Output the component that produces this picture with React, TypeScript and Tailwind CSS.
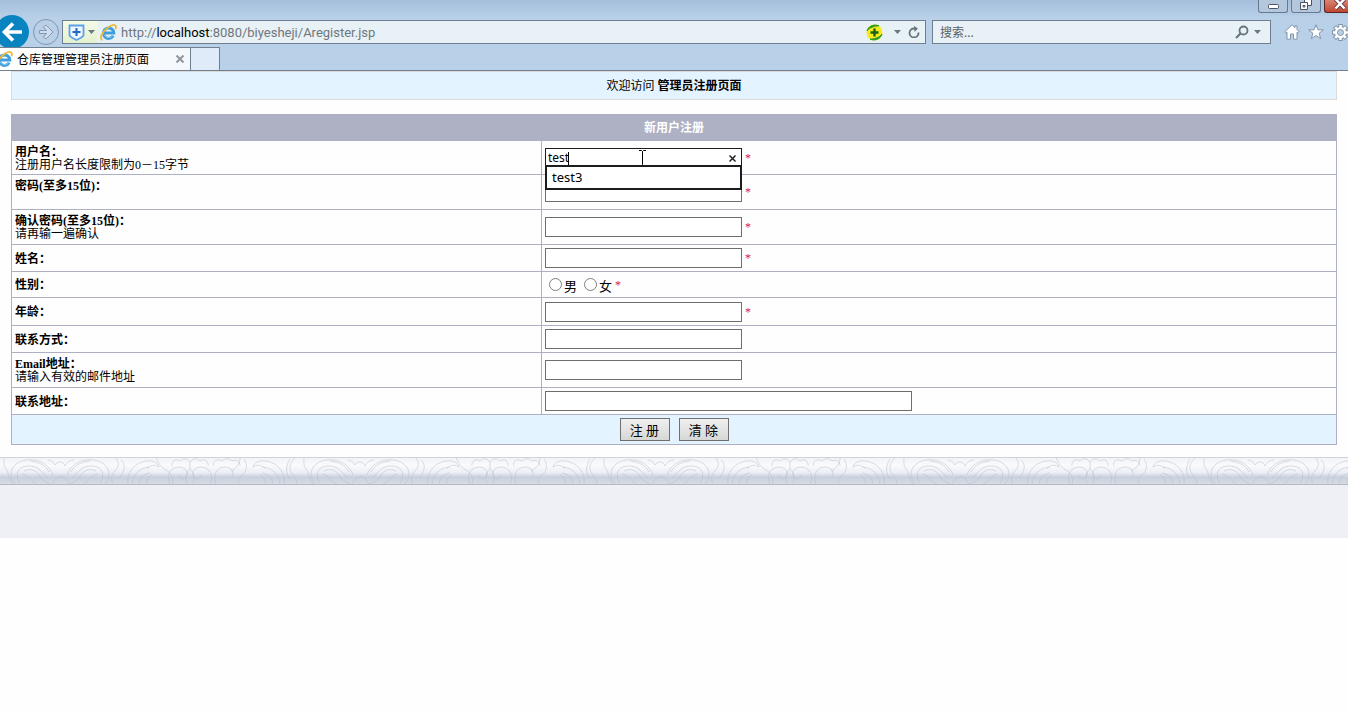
import { useState, type ReactNode } from 'react';

function IeIcon() {
  return (
    <svg className="size-[17px] shrink-0" viewBox="0 0 17 17" fill="none">
      <path d="M13.2 11.6A5.2 5.2 0 1 1 13.8 9H5" stroke="#3f9fde" strokeWidth="3" />
      <path d="M12.4 12.2A5.2 5.2 0 0 1 4 10.5" stroke="#7cc8f0" strokeWidth="1" />
      <path d="M2.6 15.9C.2 15.6.4 12 3.2 8.2 6.500 3.6 12.500-.3 15.200 1.400c1 .7.9 2.200.2 3.800" stroke="#ecbb38" strokeWidth="1.8" />
    </svg>
  );
}

function Caret() {
  return (
    <svg className="h-[4px] w-[7px] shrink-0" viewBox="0 0 7 4">
      <path d="M0 0h7L3.5 4z" fill="#6b7780" />
    </svg>
  );
}

function BackArrow() {
  return (
    <svg className="size-[22px]" viewBox="0 0 22 22" fill="none" stroke="#fff" strokeWidth="3.6">
      <path d="M21 11H4M12 2.500L3.500 11l8.500 8.500" />
    </svg>
  );
}

function ForwardArrow() {
  return (
    <svg className="size-[16px]" viewBox="0 0 16 16">
      <path d="M1.5 6.5h7L5.5 3 7 1.5h1.5L15 8l-6.5 6.5H7L5.5 13l3-3.5h-7z" fill="#cfdeee" stroke="#8296ae" />
    </svg>
  );
}

function GearIcon() {
  return (
    <svg className="size-[17px]" viewBox="0 0 17 17" fill="none">
      <g stroke="#8295ab" strokeWidth="4.5">
        <path d="M8.5 0v17M0 8.5h17M2.5 2.5l12 12M14.5 2.5l-12 12" />
      </g>
      <circle cx="8.5" cy="8.5" r="6.5" fill="#8295ab" />
      <g stroke="#fff" strokeWidth="2.5">
        <path d="M8.5 1v15M1 8.5h15M3.2 3.2l10.600 10.600M13.8 3.200L3.200 13.800" />
      </g>
      <circle cx="8.5" cy="8.5" r="5.5" fill="#fff" />
      <circle cx="8.5" cy="8.5" r="3" fill="#b7d0e8" stroke="#8295ab" />
    </svg>
  );
}

function BrowserChrome() {
  return (
    <header className="overflow-hidden bg-linear-to-b from-[#a5bedb] to-[#b8d0e8] to-[18px] font-['Noto_Sans','Noto_Sans_CJK_SC',sans-serif] text-[12px]">
      <div className="flex h-[17px] items-start justify-end gap-[3px]">
        <button aria-label="Minimize" className="flex h-[13px] w-[30px] items-center justify-center rounded-b-[3px] border border-t-0 border-[#66798f] bg-[#b5c7dc]">
          <svg className="h-[5px] w-[11px]" viewBox="0 0 11 5">
            <rect x=".5" y=".5" width="10" height="4" rx="1" fill="#fff" stroke="#4a5563" />
          </svg>
        </button>
        <button aria-label="Restore" className="flex h-[13px] w-[30px] items-start justify-center rounded-b-[3px] border border-t-0 border-[#66798f] bg-[#b5c7dc]">
          <svg className="h-[10px] w-[12px]" viewBox="0 0 12 10" fill="#fff" stroke="#4a5563">
            <path d="M4.500-1h7v6.500h-7z" />
            <path d="M.5 2.500h7v7h-7z" />
            <path d="M3 5.500h2v1.500H3z" />
          </svg>
        </button>
        <button aria-label="Close" className="flex h-[13px] w-[24px] items-start justify-center rounded-bl-[3px] border-b border-l border-[#5c2420] bg-linear-to-b from-[#d98572] to-[#c1442e] pl-[6px]">
          <svg className="h-[10px] w-[12px]" viewBox="0 0 12 10">
            <path d="M1.500-1l9 9.500M10.500-1l-9 9.500" stroke="#5b3a44" strokeWidth="4" />
            <path d="M1.500-1l9 9.500M10.500-1l-9 9.500" stroke="#fff" strokeWidth="2.5" />
          </svg>
        </button>
      </div>

      <div className="flex h-[30px] items-center">
        <button aria-label="Back" className="-ml-[5px] flex size-[34px] shrink-0 items-center justify-center rounded-full bg-[#0984c0]">
          <BackArrow />
        </button>
        <button aria-label="Forward" className="ml-1 flex size-[26px] shrink-0 items-center justify-center rounded-full border border-[#8296ae]">
          <ForwardArrow />
        </button>

        <div className="ml-[3px] flex h-[24px] min-w-0 flex-1 items-center border border-[#6f7f90] bg-[#e8f1f5]">
          <div className="flex h-full w-[34px] shrink-0 items-center gap-[3px] bg-linear-to-b from-[#f4fbe6] to-[#e2f1cf] pl-[5px]">
            <svg className="size-[17px]" viewBox="0 0 17 17" fill="none" stroke="#5d9fe8">
              <path d="M1.5 1.5h14V11c0 2-3 3-7 5-4-2-7-3-7-5z" fill="#eef7ff" strokeWidth="1.8" />
              <path d="M8.5 4v8M4.5 8h8" stroke="#2367c4" strokeWidth="2" />
            </svg>
            <Caret />
          </div>
          <span className="ml-[3px]">
            <IeIcon />
          </span>
          <p className="ml-[4px] min-w-0 flex-1 truncate pt-px font-['Roboto',sans-serif] text-[13px] text-[#6f777d]">
            http://<span className="text-black">localhost</span>:8080/biyesheji/Aregister.jsp
          </p>
          <svg className="size-[17px] shrink-0" viewBox="0 0 17 17">
            <circle cx="8.5" cy="8.5" r="8" fill="#f7ea1e" />
            <path d="M1 7C2 3 7-.5 13 1.800 9 2 4 3 1 7zM16 10c-1 4-6 7.500-12 5.200 4-.2 9-1.200 12-5.200z" fill="#2f9a22" stroke="#2f9a22" />
            <path d="M8.5 4.500v8M4.500 8.500h8" stroke="#176313" strokeWidth="2.4" />
          </svg>
          <span className="ml-[11px] flex">
            <Caret />
          </span>
          <button aria-label="Refresh" className="mr-[5px] ml-[7px]">
            <svg className="size-[12px]" viewBox="0 0 12 12" fill="none">
              <path d="M10.5 6.5A4.5 4.5 0 1 1 7 2.6" stroke="#68737c" strokeWidth="1.8" />
              <path d="M6 0l4 2.5L6.5 6z" fill="#68737c" />
            </svg>
          </button>
        </div>

        <div className="ml-[6px] flex h-[24px] w-[339px] shrink-0 items-center border border-[#6f7f90] bg-[#e8f1f5] pr-[9px] pl-[7px]">
          <input
            aria-label="搜索"
            placeholder="搜索..."
            className="min-w-0 flex-1 bg-transparent pt-[2px] text-[12px] outline-none placeholder:text-[#5a6066]"
          />
          <svg className="size-[14px]" viewBox="0 0 14 14" fill="none" stroke="#68737c">
            <circle cx="8.5" cy="5.5" r="4" strokeWidth="1.8" />
            <path d="M5.5 8.5L1 13" strokeWidth="2.200" />
          </svg>
          <span className="ml-[5px] flex">
            <Caret />
          </span>
        </div>

        <div className="-mr-px ml-[13px] flex shrink-0 gap-2">
          <svg className="size-[16px]" viewBox="0 0 16 16" fill="#fff" stroke="#8295ab">
            <path d="M8 .8L.6 8l1.200 1.200L3 8.200v7h3.500V10h3v5.200H13v-7l1.200 1L15.400 8 13 5.600V1.800h-2v1.900z" />
          </svg>
          <svg className="size-[16px]" viewBox="0 0 16 16" fill="#fff" stroke="#8295ab">
            <path d="M8 .8l1.900 5h5.500l-4.300 3.500 1.600 5.400L8 11.500l-4.700 3.200 1.600-5.400L.6 5.800h5.500z" />
          </svg>
          <GearIcon />
        </div>
      </div>

      <div className="flex h-[24px] border-b border-[#6f7f90]">
        <div className="flex w-[191px] items-center border-t border-r border-[#6f7f90] bg-linear-to-r from-white to-[#f4f8fc] pr-[6px]">
          <span className="-ml-[4px]">
            <IeIcon />
          </span>
          <span className="ml-[4px] flex-1 pt-[2px] text-black">仓库管理管理员注册页面</span>
          <button aria-label="关闭">
            <svg className="size-[8px]" viewBox="0 0 8 8" stroke="#8f969c" strokeWidth="2">
              <path d="M.5.5l7 7M7.5.5l-7 7" />
            </svg>
          </button>
        </div>
        <button aria-label="New tab" className="w-[29px] border-t border-r border-[#6f7f90] bg-[#dfebf8]" />
      </div>
    </header>
  );
}

function Required() {
  return <span className="ml-[3px] text-[12px] leading-[12px] text-[#e0202c]">*</span>;
}

type RowProps = {
  label: string;
  hint?: string;
  htmlFor?: string;
  className: string;
  children: ReactNode;
};

function Row({ label, hint, htmlFor, className, children }: RowProps) {
  return (
    <tr className={className}>
      <td className="border border-[#acb0c2] px-[3px] pt-[2px]">
        <label htmlFor={htmlFor} className="block font-bold">
          {label}
        </label>
        {hint !== undefined && <p className="min-h-[13px]">{hint}</p>}
      </td>
      <td className="border border-[#acb0c2] px-[3px]">
        <div className="flex items-center">{children}</div>
      </td>
    </tr>
  );
}

const field = 'h-[20px] w-[197px] border border-[#6e6e6e] bg-white px-[2px] outline-none';
const radio = 'size-[13px] appearance-none rounded-full border border-[#808080] bg-white checked:bg-[#333]';
const button = 'h-[23px] w-[50px] border border-[#707070] bg-linear-to-b from-[#efefef] to-[#d6d8d6] pt-px';

function RegisterForm() {
  const [username, setUsername] = useState('test');

  return (
    <form className="mt-[14px]">
      <table className="w-full table-fixed border-collapse border border-[#acb0c2]">
        <colgroup>
          <col className="w-2/5" />
          <col className="w-3/5" />
        </colgroup>
        <thead>
          <tr className="h-[26px] bg-[#aeb1c3]">
            <th colSpan={2} className="pt-[2px] text-center font-bold text-white">
              新用户注册
            </th>
          </tr>
        </thead>
        <tbody>
          <Row label="用户名：" hint="注册用户名长度限制为0－15字节" htmlFor="username" className="h-[34px]">
            <div className="relative flex">
              <input
                id="username"
                value={username}
                onChange={(e) => setUsername(e.target.value)}
                className="h-[20px] w-[197px] border border-[#1c1c1c] bg-white px-[2px] font-['Noto_Sans',sans-serif] text-[12px] outline-none"
              />
              {/* text caret and mouse pointer */}
              <span className="absolute top-[4px] left-[23px] h-[13px] w-px bg-black" />
              <svg className="absolute top-[2px] left-[94px] h-[16px] w-[7px]" viewBox="0 0 7 16" fill="none" stroke="#000">
                <path d="M0 .5h2.500l1 1 1-1H7M3.500 1.500v13M0 15.500h2.500l1-1 1 1H7" />
              </svg>
              <button type="button" aria-label="清除" onClick={() => setUsername('')} className="absolute top-[7px] right-[6px]">
                <svg className="size-[7px]" viewBox="0 0 7 7" stroke="#222" strokeWidth="1.5">
                  <path d="M.5.5l6 6M6.500.5l-6 6" />
                </svg>
              </button>
              <ul className="absolute top-[17px] left-0 z-10 w-full border-2 border-[#1c1c1c] bg-white font-['Noto_Sans',sans-serif] text-[13px] leading-[21px]">
                <li className="px-[5px]">test3</li>
              </ul>
            </div>
            <Required />
          </Row>
          <Row label="密码(至多15位)：" hint="" htmlFor="password" className="h-[35px]">
            <input id="password" type="password" className={field} />
            <Required />
          </Row>
          <Row label="确认密码(至多15位)：" hint="请再输一遍确认" htmlFor="confirm" className="h-[35px]">
            <input id="confirm" type="password" className={field} />
            <Required />
          </Row>
          <Row label="姓名：" htmlFor="name" className="h-[27px]">
            <input id="name" className={field} />
            <Required />
          </Row>
          <Row label="性别：" className="h-[26px]">
            <label className="ml-1 flex items-center gap-[2px] text-[13px]">
              <input type="radio" name="sex" className={radio} />
              <span className="pt-[3px]">男</span>
            </label>
            <label className="ml-[7px] flex items-center gap-[2px] text-[13px]">
              <input type="radio" name="sex" className={radio} />
              <span className="pt-[3px]">女</span>
            </label>
            <Required />
          </Row>
          <Row label="年龄：" htmlFor="age" className="h-[28px]">
            <input id="age" className={field} />
            <Required />
          </Row>
          <Row label="联系方式：" htmlFor="phone" className="h-[27px]">
            <input id="phone" className={field} />
          </Row>
          <Row label="Email地址：" hint="请输入有效的邮件地址" htmlFor="email" className="h-[35px]">
            <input id="email" className={field} />
          </Row>
          <Row label="联系地址：" htmlFor="address" className="h-[27px]">
            <input id="address" className="h-[20px] w-[367px] border border-[#6e6e6e] bg-white px-[2px] outline-none" />
          </Row>
          <tr className="h-[30px] bg-[#e3f3ff]">
            <td colSpan={2} className="border border-[#acb0c2]">
              <div className="flex justify-center gap-[9px] text-[13px]">
                <button type="button" className={button}>
                  注 册
                </button>
                <button type="reset" className={button}>
                  清 除
                </button>
              </div>
            </td>
          </tr>
        </tbody>
      </table>
    </form>
  );
}

function OrnamentStrip() {
  return (
    <svg className="block h-[28px] w-full">
      <defs>
        <linearGradient id="strip" x1="0" y1="0" x2="0" y2="1">
          <stop offset="0" stopColor="#f1f2f5" />
          <stop offset="0.3" stopColor="#fafafc" />
          <stop offset="0.55" stopColor="#eceff5" />
          <stop offset="0.72" stopColor="#c9d0de" />
          <stop offset="1" stopColor="#d9dde5" />
        </linearGradient>
        <pattern id="leaves" width="300" height="28" patternUnits="userSpaceOnUse">
          <g fill="none" stroke="#b4bbc8" strokeOpacity=".5">
            {/* left scroll */}
            <path d="M4 0c0 5-1 8 2 12s2 10 8 16M16 28C6 18 12 5 26 3c14-2 24 6 27 15M20 26c-6-8-2-17 8-17 10-1 14 7 20 12M24 14c6-3 12-1 15 4 3 6 8 8 14 10M22 17c7 0 8 8 16 11M30 4c10 1 16 5 19 11" />
            <path d="M104 28c10-10 4-23-10-25-14-2-24 6-27 15M100 26c6-8 2-17-8-17-10-1-14 7-20 12M96 14c-6-3-12-1-15 4-3 6-8 8-14 10M98 17c-7 0-8 8-16 11M90 4c-10 1-16 5-19 11" />
            <path d="M48 3c2 0 6 2 7 5 1-2 3-3 5-3 3 0 4 2 5 4 2-4 5-6 9-6M52 28c1-4 4-7 9-9 4 2 7 5 8 9" />
            {/* stems */}
            <path d="M115 0c5 6 4 10 0 14s-4 9-2 14M121 3c5 4 4 12-2 18M128 28c-2-12 6-22 18-24 6-1 12 1 13 6-4-3-9-2-12 2M132 28c0-9 7-17 17-18M139 28c0-6 4-11 11-12M147 28c-1-4 1-8 5-10M156 0c2 5 4 10 10 13 5 3 8 8 6 14" />
            {/* middle flower */}
            <path d="M170 27c-4-8 0-17 9-17 7 0 10 6 7 10-2 3-7 2-7-2M210 27c4-8 0-17-9-17-7 0-10 6-7 10 2 3 7 2 7-2M172 9c-1-5 4-8 8-5 3-3 7-3 10 1 3-4 7-4 10-1 4-3 9 0 8 5M190 5v7c-4 4-5 9-3 15M190 12c4 4 5 9 3 15" />
            <path d="M214 9c-2-5 3-8 8-5 3-3 7-3 10 0 4-2 8 0 8 5M216 27c-3-8 0-17 9-17 7 0 10 6 7 10M240 0c0 6-3 11-9 14" />
            {/* right stems */}
            <path d="M284 28c2-12-6-22-18-24-6-1-12 1-13 6 4-3 9-2 12 2M280 28c0-9-7-17-17-18M273 28c0-6-4-11-11-12M265 28c1-4-1-8-5-10M244 2c4 6 3 12-2 16s-4 8-2 10M296 0c-7 6-8 12-3 18s4 8 3 10M290 2c-4 6-5 14 0 20" />
          </g>
        </pattern>
      </defs>
      <rect width="100%" height="28" fill="url(#strip)" />
      <rect width="100%" height="28" fill="url(#leaves)" />
      <rect width="100%" height="1" fill="#cfd2da" />
      <rect y="27" width="100%" height="1" fill="#b4bac6" />
    </svg>
  );
}

export default function App() {
  return (
    <div className="min-h-screen bg-[#fdfefd]">
      <BrowserChrome />
      <main className="px-[11px] font-['Liberation_Serif','Noto_Sans_CJK_SC',serif] text-[12px] leading-[13px] text-black">
        <h1 className="border border-[#dcdad8] bg-[#e3f3ff] pt-2 pb-[6px] text-center">
          欢迎访问 <b>管理员注册页面</b>
        </h1>
        <RegisterForm />
      </main>
      <footer className="mt-[12px] h-[81px] bg-[#eff0f5]">
        <OrnamentStrip />
      </footer>
    </div>
  );
}
